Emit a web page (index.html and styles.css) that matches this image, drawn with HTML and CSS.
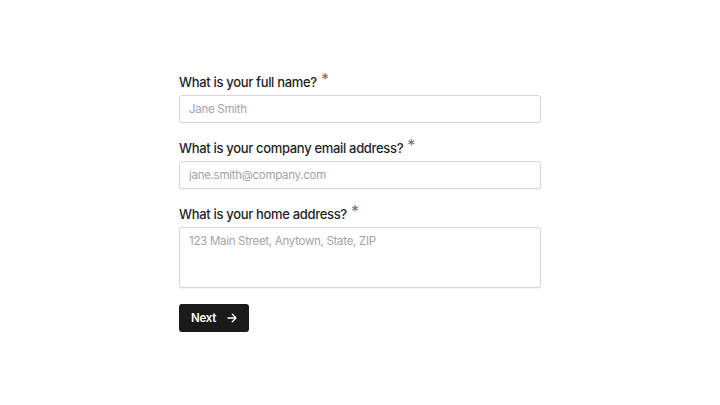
FILE: index.html
```html
<!DOCTYPE html>
<html lang="en">
<head>
<meta charset="utf-8">
<link rel="stylesheet" href="styles.css">
</head>
<body>
<form class="form">
  <div class="field">
    <label class="label">What is your full name? <span class="req">*</span></label>
    <input class="input" type="text" placeholder="Jane Smith">
  </div>
  <div class="field">
    <label class="label">What is your company email address? <span class="req">*</span></label>
    <input class="input" type="text" placeholder="jane.smith@company.com">
  </div>
  <div class="field">
    <label class="label">What is your home address? <span class="req">*</span></label>
    <textarea class="input textarea" placeholder="123 Main Street, Anytown, State, ZIP"></textarea>
  </div>
  <button class="btn" type="button">Next
    <svg class="arrow" width="10" height="10" viewBox="0 0 10 10" fill="none" stroke="#fff" stroke-width="1.3" stroke-linecap="round" stroke-linejoin="round"><path d="M1 5h8M5.3 1.3L9 5 5.3 8.7"/></svg>
  </button>
</form>
</body>
</html>
```

FILE: styles.css
```css
html, body {
  margin: 0;
  background: #ffffff;
}
body {
  font-family: Inter, "Noto Sans", sans-serif;
  color: #1f1f1f;
}
.form {
  width: 362px;
  margin: 0 auto;
  padding-top: 73px;
  display: flex;
  flex-direction: column;
  gap: 16px;
}
.field {
  display: flex;
  flex-direction: column;
  gap: 4px;
}
.label {
  display: block;
  font-size: 13px;
  font-weight: 500;
  line-height: 18px;
  height: 18px;
  letter-spacing: -0.025em;
  color: #1f1f1f;
}
.req {
  font-size: 16px;
  line-height: 0;
  color: #707070;
  position: relative;
  top: -2px;
  font-weight: 400;
  margin-left: 1px;
}
.input {
  box-sizing: border-box;
  width: 100%;
  height: 28px;
  border: 1px solid #d6d6d6;
  border-radius: 3px;
  padding: 0 9px;
  font-family: Inter, "Noto Sans", sans-serif;
  font-size: 11.5px;
  letter-spacing: -0.025em;
  color: #1f1f1f;
  background: #fff;
  box-shadow: 0 1px 1px rgba(0,0,0,0.04);
  outline: none;
}
.input::placeholder {
  color: #a3a3a3;
}
.textarea {
  height: 61px;
  padding: 5px 9px;
  resize: none;
  line-height: 16px;
  display: block;
}
.btn {
  align-self: flex-start;
  height: 28px;
  width: 70px;
  background: #1a1a1a;
  color: #fff;
  border: none;
  border-radius: 3px;
  font-family: Inter, "Noto Sans", sans-serif;
  font-size: 11.5px;
  letter-spacing: -0.025em;
  font-weight: 600;
  display: flex;
  align-items: center;
  padding: 0 0 0 12px;
  gap: 11px;
}
.arrow {
  display: block;
}
```
